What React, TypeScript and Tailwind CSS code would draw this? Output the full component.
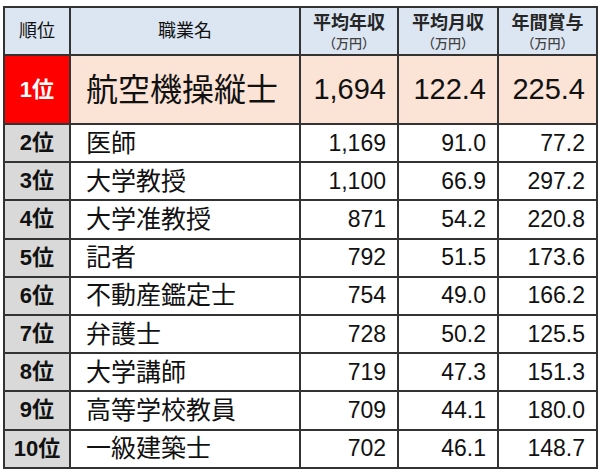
import React from "react";

type Row = {
  rank: number;
  job: string;
  annual: string;
  monthly: string;
  bonus: string;
};

const rows: Row[] = [
  { rank: 1, job: "航空機操縦士", annual: "1,694", monthly: "122.4", bonus: "225.4" },
  { rank: 2, job: "医師", annual: "1,169", monthly: "91.0", bonus: "77.2" },
  { rank: 3, job: "大学教授", annual: "1,100", monthly: "66.9", bonus: "297.2" },
  { rank: 4, job: "大学准教授", annual: "871", monthly: "54.2", bonus: "220.8" },
  { rank: 5, job: "記者", annual: "792", monthly: "51.5", bonus: "173.6" },
  { rank: 6, job: "不動産鑑定士", annual: "754", monthly: "49.0", bonus: "166.2" },
  { rank: 7, job: "弁護士", annual: "728", monthly: "50.2", bonus: "125.5" },
  { rank: 8, job: "大学講師", annual: "719", monthly: "47.3", bonus: "151.3" },
  { rank: 9, job: "高等学校教員", annual: "709", monthly: "44.1", bonus: "180.0" },
  { rank: 10, job: "一級建築士", annual: "702", monthly: "46.1", bonus: "148.7" },
];

const font = "font-['Liberation_Sans','Noto_Sans_CJK_JP',sans-serif]";
const cell = "border-2 border-[#333] p-0";

function MoneyHead({ title }: { title: string }) {
  return (
    <th className={`${cell} bg-[#dce6f2] align-middle`}>
      <div className="flex flex-col items-center gap-[5px] pt-[1px]">
        <span className="text-[18px] font-bold leading-none text-[#262626]">{title}</span>
        <span className="text-[13px] font-medium leading-none text-[#404040]">（万円）</span>
      </div>
    </th>
  );
}

export default function App() {
  return (
    <div className={`h-[474px] w-[600px] bg-white pl-[3px] pt-[6px] ${font}`}>
      <table className="table-fixed border-collapse text-[#111]">
        <colgroup>
          <col className="w-[66px]" />
          <col className="w-[230px]" />
          <col className="w-[98px]" />
          <col className="w-[100px]" />
          <col className="w-[99px]" />
        </colgroup>
        <thead>
          <tr className="h-[48px]">
            <th className={`${cell} bg-[#dce6f2] text-[18px] font-normal leading-none`}>順位</th>
            <th className={`${cell} bg-[#dce6f2] text-[18px] font-normal leading-none`}>職業名</th>
            <MoneyHead title="平均年収" />
            <MoneyHead title="平均月収" />
            <MoneyHead title="年間賞与" />
          </tr>
        </thead>
        <tbody>
          {rows.map((r) => {
            const top = r.rank === 1;
            return (
              <tr key={r.rank} className={top ? "h-[69px] bg-[#fbe3d6]" : "h-[38.2px] bg-white"}>
                <td
                  className={`${cell} text-center text-[22px] font-bold leading-none ${
                    top ? "bg-[#ff0000] text-white" : "bg-[#d9d9d9] text-[#111]"
                  }`}
                >
                  {r.rank}位
                </td>
                <td className={`${cell} pl-[15px] leading-none ${top ? "text-[32px]" : "text-[25px]"}`}>
                  {r.job}
                </td>
                <td className={`${cell} pr-[11px] text-right leading-none ${top ? "text-[29px]" : "text-[23px]"}`}>
                  {r.annual}
                </td>
                <td className={`${cell} pr-[11px] text-right leading-none ${top ? "text-[29px]" : "text-[23px]"}`}>
                  {r.monthly}
                </td>
                <td className={`${cell} pr-[11px] text-right leading-none ${top ? "text-[29px]" : "text-[23px]"}`}>
                  {r.bonus}
                </td>
              </tr>
            );
          })}
        </tbody>
      </table>
    </div>
  );
}
